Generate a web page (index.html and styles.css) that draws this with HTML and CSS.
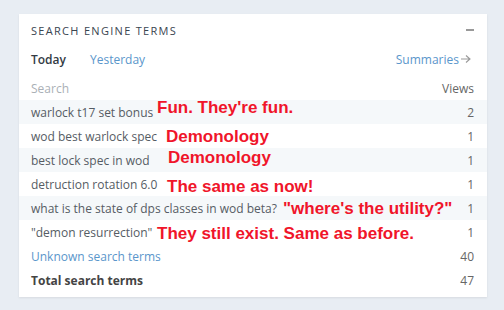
FILE: index.html
```html
<!DOCTYPE html>
<html lang="en">

<head>
  <meta charset="UTF-8">
  <title>Search Engine Terms</title>
  <link rel="stylesheet" href="styles.css">
</head>

<body>
  <div class="card">
    <div class="card-head">
      <h2>Search Engine Terms</h2>
      <span class="collapse"></span>
    </div>

    <div class="tabs">
      <span class="tab active">Today</span>
      <span class="tab">Yesterday</span>
      <span class="summaries">Summaries<svg width="12" height="10" viewBox="0 0 12 10"><path d="M1 5h9M6 1.5l4 3.5-4 3.5" fill="none" stroke="#999" stroke-width="1.1"/></svg></span>
    </div>

    <table>
      <thead>
        <tr>
          <th>Search</th>
          <th class="num">Views</th>
        </tr>
      </thead>
      <tbody>
        <tr class="odd">
          <td>warlock t17 set bonus<span class="note n1">Fun. They're fun.</span></td>
          <td class="num">2</td>
        </tr>
        <tr>
          <td>wod best warlock spec<span class="note n2">Demonology</span></td>
          <td class="num">1</td>
        </tr>
        <tr class="odd">
          <td>best lock spec in wod<span class="note n3">Demonology</span></td>
          <td class="num">1</td>
        </tr>
        <tr>
          <td>detruction rotation 6.0<span class="note n4">The same as now!</span></td>
          <td class="num">1</td>
        </tr>
        <tr class="odd">
          <td>what is the state of dps classes in wod beta?<span class="note n5">"where's the utility?"</span></td>
          <td class="num">1</td>
        </tr>
        <tr>
          <td>"demon resurrection"<span class="note n6">They still exist. Same as before.</span></td>
          <td class="num">1</td>
        </tr>
        <tr>
          <td class="unknown">Unknown search terms</td>
          <td class="num">40</td>
        </tr>
        <tr>
          <td class="total">Total search terms</td>
          <td class="num">47</td>
        </tr>
      </tbody>
    </table>
  </div>
</body>

</html>
```

FILE: styles.css
```css
body {
  margin: 0;
  padding: 14px 17px 13px 19px;
  background-color: #e8edf3;
  font-family: "Open Sans", Arial, sans-serif;
  color: #555c64;
}

.card {
  background-color: #fff;
  box-shadow: 0 1px 2px rgba(0, 0, 0, 0.08);
  padding-bottom: 5px;
}

.card-head {
  display: flex;
  align-items: center;
  justify-content: space-between;
  height: 32px;
  padding: 0 13px 0 12px;
}

.card-head h2 {
  margin: 0;
  font-size: 11px;
  font-weight: normal;
  letter-spacing: 1.3px;
  text-transform: uppercase;
  color: #3a4550;
}

.collapse {
  width: 8px;
  height: 2px;
  background-color: #999;
}

.tabs {
  display: flex;
  align-items: center;
  height: 26px;
  padding: 0 15px 0 12px;
  font-size: 12px;
}

.tab {
  margin-right: 24px;
  color: #5a96cb;
}

.tab.active {
  color: #333b44;
  font-weight: 600;
}

.summaries {
  margin-left: auto;
  color: #5a96cb;
  display: flex;
  align-items: center;
  gap: 1px;
}

table {
  width: 100%;
  border-collapse: collapse;
  margin-top: 4px;
  font-size: 12px;
}

th,
td {
  height: 24px;
  padding: 0 13px 0 12px;
  text-align: left;
  white-space: nowrap;
}

th {
  font-weight: normal;
  color: #aab0b6;
}

td {
  position: relative;
}

.num {
  text-align: right;
  color: #666;
}

tr.odd {
  background-color: #f5f8fa;
}

.unknown {
  color: #5a96cb;
}

.total {
  font-weight: 700;
  color: #444;
}

.note {
  position: absolute;
  font-family: "Liberation Sans", Arial, sans-serif;
  font-weight: bold;
  font-size: 17px;
  line-height: 1;
  color: #f0152a;
}

.n1 { left: 138px; top: -1.5px; }
.n2 { left: 147px; top: 3.5px; }
.n3 { left: 149px; top: 0.5px; }
.n4 { left: 148px; top: 5.8px; }
.n5 { left: 264px; top: 3.5px; }
.n6 { left: 138px; top: 4.5px; }
```
